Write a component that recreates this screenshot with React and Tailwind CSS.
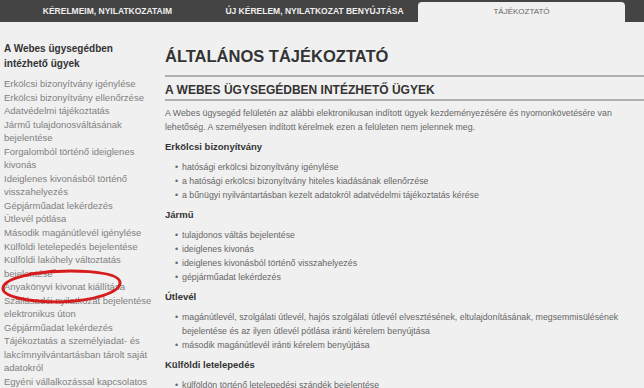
const TABS = ['KÉRELMEIM, NYILATKOZATAIM', 'ÚJ KÉRELEM, NYILATKOZAT BENYÚJTÁSA', 'TÁJÉKOZTATÓ']

const LINKS = [
  'Erkölcsi bizonyítvány igénylése',
  'Erkölcsi bizonyítvány ellenőrzése',
  'Adatvédelmi tájékoztatás',
  'Jármű tulajdonosváltásának bejelentése',
  'Forgalomból történő ideiglenes kivonás',
  'Ideiglenes kivonásból történő visszahelyezés',
  'Gépjárműadat lekérdezés',
  'Útlevél pótlása',
  'Második magánútlevél igénylése',
  'Külföldi letelepedés bejelentése',
  'Külföldi lakóhely változtatás bejelentése',
  'Anyakönyvi kivonat kiállítása',
  'Szállásadói nyilatkozat bejelentése elektronikus úton',
  'Gépjárműadat lekérdezés',
  'Tájékoztatás a személyiadat- és lakcímnyilvántartásban tárolt saját adatokról',
  'Egyéni vállalkozással kapcsolatos',
]

const SECTIONS = [
  {
    title: 'Erkölcsi bizonyítvány',
    items: [
      'hatósági erkölcsi bizonyítvány igénylése',
      'a hatósági erkölcsi bizonyítvány hiteles kiadásának ellenőrzése',
      'a bűnügyi nyilvántartásban kezelt adatokról adatvédelmi tájékoztatás kérése',
    ],
  },
  {
    title: 'Jármű',
    items: [
      'tulajdonos váltás bejelentése',
      'ideiglenes kivonás',
      'ideiglenes kivonásból történő visszahelyezés',
      'gépjárműadat lekérdezés',
    ],
  },
  {
    title: 'Útlevél',
    items: [
      'magánútlevél, szolgálati útlevél, hajós szolgálati útlevél elvesztésének, eltulajdonításának, megsemmisülésének bejelentése és az ilyen útlevél pótlása iránti kérelem benyújtása',
      'második magánútlevél iránti kérelem benyújtása',
    ],
  },
  {
    title: 'Külföldi letelepedés',
    items: ['külföldön történő letelepedési szándék bejelentése'],
  },
]

export default function App() {
  return (
    <div className="w-[644px] h-[388px] overflow-hidden bg-[#f0f0f0] font-['Liberation_Sans',Arial,sans-serif]">
      <div className="h-[22px] bg-[#444444] flex pl-[4px]">
        {TABS.map((t, i) => (
          <div
            key={t}
            className={
              i === 2
                ? 'w-[207px] mt-[2px] rounded-t-[4px] bg-[#f0f0f0] text-[#666] text-[8px] flex items-center justify-center'
                : 'w-[207px] text-[#eeeeee] font-bold text-[8.5px] flex items-center justify-center'
            }
          >
            {t}
          </div>
        ))}
      </div>

      <div className="flex">
        <div className="relative w-[165px] shrink-0 pl-[4px] pr-[6px] pt-[19px]">
          <h3 className="text-[10px] font-bold text-[#333] leading-[15px]">A Webes ügysegédben intézhető ügyek</h3>
          <ul className="mt-[6px] text-[9.5px] text-[#808080] leading-[13.55px]">
            {LINKS.map((l, i) => (
              <li key={i}>{l}</li>
            ))}
          </ul>
          {/* hand-drawn red mark */}
          <svg className="absolute left-0 top-[245px]" width="126" height="40" viewBox="0 0 126 40">
            <path
              d="M30 7 C70 1 118 4 120 15 C121 25 95 34 60 35 C25 35 2 29 3 21 C4 12 25 7 55 4"
              fill="none"
              stroke="#d61c1c"
              strokeWidth="3"
              strokeLinecap="round"
            />
          </svg>
        </div>

        <div className="flex-1 pt-[24px]">
          <h1 className="text-[16.5px] font-bold text-[#333] leading-[20px]">ÁLTALÁNOS TÁJÉKOZTATÓ</h1>
          <div className="mt-[9px] h-[2px] bg-[#b0b0b0]" />
          <h2 className="mt-[6px] text-[12px] font-bold text-[#333] leading-[14px]">A WEBES ÜGYSEGÉDBEN INTÉZHETŐ ÜGYEK</h2>
          <div className="mt-[2px] h-[2px] bg-[#b0b0b0]" />
          <p className="mt-[6px] pr-[20px] text-[8.8px] text-[#666] leading-[13.5px]">
            A Webes ügysegéd felületén az alábbi elektronikusan indított ügyek kezdeményezésére és nyomonkövetésére van lehetőség. A személyesen indított kérelmek ezen a felületen nem jelennek meg.
          </p>
          {SECTIONS.map(s => (
            <div key={s.title}>
              <h4 className="mt-[7px] text-[9.5px] font-bold text-[#333] leading-[12px]">{s.title}</h4>
              <ul className="mt-[7px] pl-[10px] pr-[20px] text-[8.8px] text-[#666] leading-[14px]">
                {s.items.map(it => (
                  <li key={it} className="flex">
                    <span className="w-[7px] shrink-0">•</span>
                    <span>{it}</span>
                  </li>
                ))}
              </ul>
            </div>
          ))}
        </div>
      </div>
    </div>
  )
}
